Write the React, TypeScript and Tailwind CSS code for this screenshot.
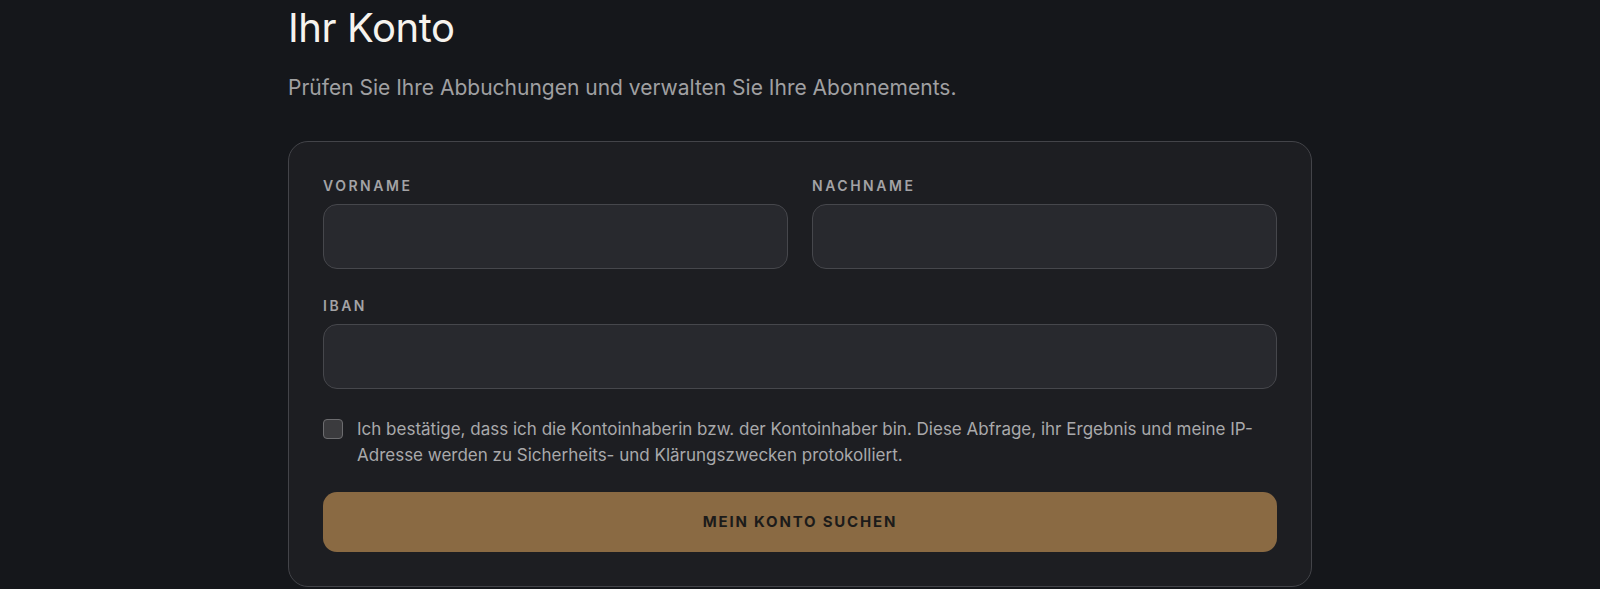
import { useState } from "react"

const labelCls =
  "mb-2 block text-sm leading-5 font-semibold uppercase tracking-[0.18em] text-[#a3a3a6]"

const inputCls =
  "block h-[65px] w-full rounded-[14px] border border-[#46474c] bg-[#28292e] px-4 text-base text-[#e8e6e1] outline-none focus:border-[#8a6a42]"

export default function App() {
  const [confirmed, setConfirmed] = useState(false)

  return (
    <div className="min-h-screen bg-[#15171b] font-['Inter','Noto_Sans',sans-serif] text-[#f4f2ed]">
      <main className="mx-auto max-w-5xl pt-1">
        <h1 className="text-[40px] leading-[48px] font-normal tracking-[-0.01em] text-[#f6f3ee]">
          Ihr Konto
        </h1>
        <p className="mt-[22px] text-[21px] leading-7 text-[#a0a0a2]">
          Prüfen Sie Ihre Abbuchungen und verwalten Sie Ihre Abonnements.
        </p>

        <form
          className="mt-[39px] rounded-[20px] border border-[#434449] bg-[#1d1e22] p-[34px]"
          onSubmit={(e) => e.preventDefault()}
        >
          <div className="space-y-[27px]">
            <div className="grid grid-cols-2 gap-6">
              <div>
                <label htmlFor="vorname" className={labelCls}>
                  Vorname
                </label>
                <input id="vorname" className={inputCls} />
              </div>
              <div>
                <label htmlFor="nachname" className={labelCls}>
                  Nachname
                </label>
                <input id="nachname" className={inputCls} />
              </div>
            </div>

            <div>
              <label htmlFor="iban" className={labelCls}>
                IBAN
              </label>
              <input id="iban" className={inputCls} />
            </div>

            <label className="flex items-start gap-3.5 text-[17px] leading-[26px] text-[#a9a9ab]">
              <input
                type="checkbox"
                checked={confirmed}
                onChange={(e) => setConfirmed(e.target.checked)}
                className="mt-[3px] size-5 shrink-0 appearance-none rounded-[4px] border border-[#6c6c6f] bg-[#3b3b3e] checked:bg-[#8a6a42]"
              />
              <span>
                Ich bestätige, dass ich die Kontoinhaberin bzw. der Kontoinhaber bin. Diese
                Abfrage, ihr Ergebnis und meine IP-Adresse werden zu Sicherheits- und
                Klärungszwecken protokolliert.
              </span>
            </label>
          </div>

          <button
            type="submit"
            className="mt-6 flex h-[60px] w-full items-center justify-center rounded-[14px] bg-[#8a6a43] text-[15px] font-bold uppercase tracking-[0.12em] text-[#1c1b1a]"
          >
            Mein Konto suchen
          </button>
        </form>
      </main>
    </div>
  )
}
